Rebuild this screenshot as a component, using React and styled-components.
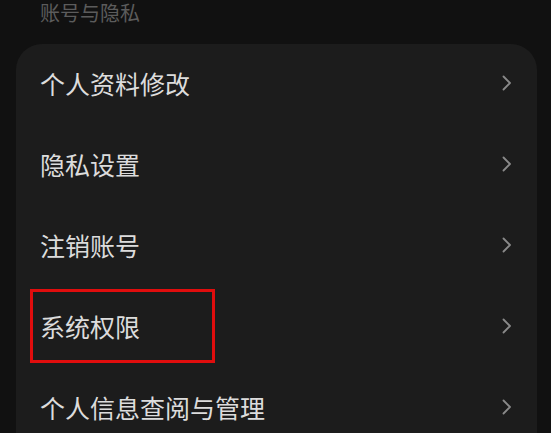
import React from "react";
import styled, { createGlobalStyle } from "styled-components";

const Global = createGlobalStyle`
  html, body { margin: 0; padding: 0; background: #111111; }
  body { font-family: "Noto Sans CJK SC", "Noto Sans", sans-serif; overflow: hidden; }
`;

const Page = styled.div`
  width: 551px;
  height: 433px;
  background: #111111;
  overflow: hidden;
  display: flex;
  flex-direction: column;
`;

const SectionTitle = styled.div`
  flex-shrink: 0;
  height: 44px;
  padding-left: 40px;
  font-size: 20px;
  line-height: 26px;
  color: #5c5c5c;
  box-sizing: border-box;
`;

const Card = styled.div`
  flex-shrink: 0;
  margin: 0 14px 0 16px;
  background: #1c1c1c;
  border-radius: 26px 26px 0 0;
  display: flex;
  flex-direction: column;
`;

const Row = styled.div`
  position: relative;
  flex-shrink: 0;
  height: 81px;
  box-sizing: border-box;
  display: flex;
  align-items: center;
  justify-content: space-between;
  padding: 0 25px 3px 24px;
`;

const Label = styled.span`
  font-size: 25px;
  color: #dcdcdc;
`;

const Highlight = styled.div`
  position: absolute;
  left: 14px;
  top: 2px;
  width: 185px;
  height: 74px;
  border: 3px solid #e00d0d;
  box-sizing: border-box;
  pointer-events: none;
`;

const Chevron = () => (
  <svg width="10" height="16" viewBox="0 0 10 16" fill="none">
    <path d="M1.5 1.5 L8 8 L1.5 14.5" stroke="#8a8a8a" strokeWidth="1.8" strokeLinecap="round" strokeLinejoin="round" />
  </svg>
);

const items = ["个人资料修改", "隐私设置", "注销账号", "系统权限", "个人信息查阅与管理"];

export default function App() {
  return (
    <Page>
      <Global />
      <SectionTitle>账号与隐私</SectionTitle>
      <Card>
        {items.map((t, i) => (
          <Row key={t}>
            <Label>{t}</Label>
            <Chevron />
            {i === 3 && <Highlight />}
          </Row>
        ))}
      </Card>
    </Page>
  );
}
